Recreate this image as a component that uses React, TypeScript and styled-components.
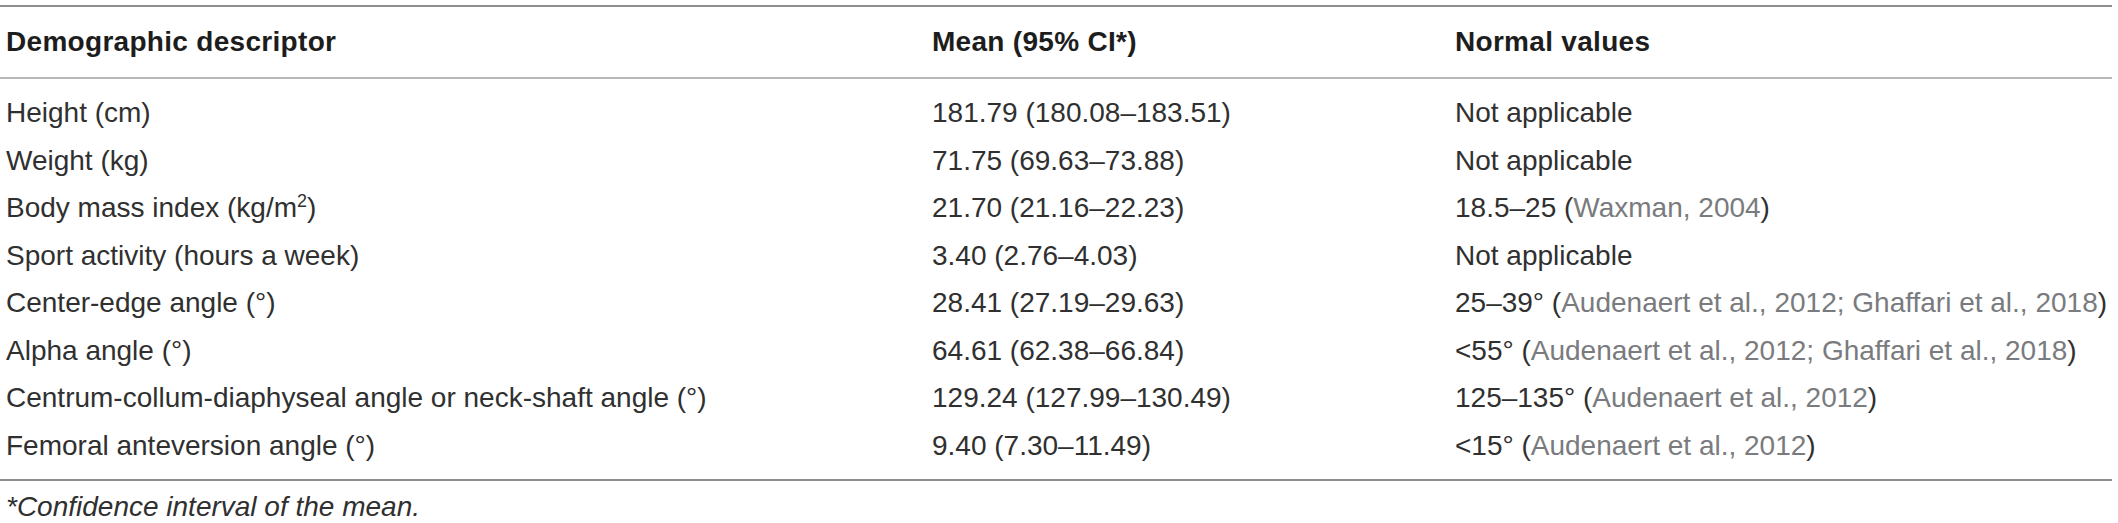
import React from "react";
import styled, { createGlobalStyle } from "styled-components";

const Global = createGlobalStyle`
  html, body { margin: 0; padding: 0; background: #ffffff; }
  body { font-family: "Liberation Sans", Arial, sans-serif; }
`;

const Page = styled.div`
  width: 2118px;
  padding-top: 5px;
  box-sizing: border-box;
`;

const Table = styled.div`
  width: 2112px;
  border-top: 2px solid #8e8e8e;
  border-bottom: 2px solid #8e8e8e;
`;

const GridRow = styled.div`
  display: grid;
  grid-template-columns: 926px 523px 1fr;
  align-items: center;
`;

const HeadRow = styled(GridRow)`
  height: 70px;
  border-bottom: 2px solid #b8b8b8;
`;

const HeadCell = styled.div`
  padding-left: 6px;
  font-size: 28px;
  font-weight: 700;
  letter-spacing: 0.3px;
  color: #1d1d1d;
  white-space: nowrap;
`;

const Body = styled.div`
  padding: 10px 0;
`;

const Row = styled(GridRow)`
  height: 47.5px;
`;

const Cell = styled.div`
  padding-left: 6px;
  font-size: 28px;
  font-weight: 400;
  color: #303030;
  white-space: nowrap;
  line-height: 47.5px;
`;

const Cite = styled.span`
  color: #7a7b7e;
`;

const Sup = styled.sup`
  font-size: 18px;
  line-height: 0;
  vertical-align: 10px;
`;

const Footnote = styled.div`
  padding-left: 6px;
  padding-top: 9px;
  font-size: 28px;
  font-style: italic;
  color: #303030;
  line-height: 34px;
`;

type RowData = { label: React.ReactNode; mean: string; normal: React.ReactNode };

const rows: RowData[] = [
  { label: "Height (cm)", mean: "181.79 (180.08–183.51)", normal: "Not applicable" },
  { label: "Weight (kg)", mean: "71.75 (69.63–73.88)", normal: "Not applicable" },
  {
    label: (
      <>
        Body mass index (kg/m<Sup>2</Sup>)
      </>
    ),
    mean: "21.70 (21.16–22.23)",
    normal: (
      <>
        18.5–25 (<Cite>Waxman, 2004</Cite>)
      </>
    ),
  },
  { label: "Sport activity (hours a week)", mean: "3.40 (2.76–4.03)", normal: "Not applicable" },
  {
    label: "Center-edge angle (°)",
    mean: "28.41 (27.19–29.63)",
    normal: (
      <>
        25–39° (<Cite>Audenaert et al., 2012; Ghaffari et al., 2018</Cite>)
      </>
    ),
  },
  {
    label: "Alpha angle (°)",
    mean: "64.61 (62.38–66.84)",
    normal: (
      <>
        &lt;55° (<Cite>Audenaert et al., 2012; Ghaffari et al., 2018</Cite>)
      </>
    ),
  },
  {
    label: "Centrum-collum-diaphyseal angle or neck-shaft angle (°)",
    mean: "129.24 (127.99–130.49)",
    normal: (
      <>
        125–135° (<Cite>Audenaert et al., 2012</Cite>)
      </>
    ),
  },
  {
    label: "Femoral anteversion angle (°)",
    mean: "9.40 (7.30–11.49)",
    normal: (
      <>
        &lt;15° (<Cite>Audenaert et al., 2012</Cite>)
      </>
    ),
  },
];

export default function App() {
  return (
    <Page>
      <Global />
      <Table>
        <HeadRow>
          <HeadCell>Demographic descriptor</HeadCell>
          <HeadCell>Mean (95% CI*)</HeadCell>
          <HeadCell>Normal values</HeadCell>
        </HeadRow>
        <Body>
          {rows.map((r, i) => (
            <Row key={i}>
              <Cell>{r.label}</Cell>
              <Cell>{r.mean}</Cell>
              <Cell>{r.normal}</Cell>
            </Row>
          ))}
        </Body>
      </Table>
      <Footnote>*Confidence interval of the mean.</Footnote>
    </Page>
  );
}
